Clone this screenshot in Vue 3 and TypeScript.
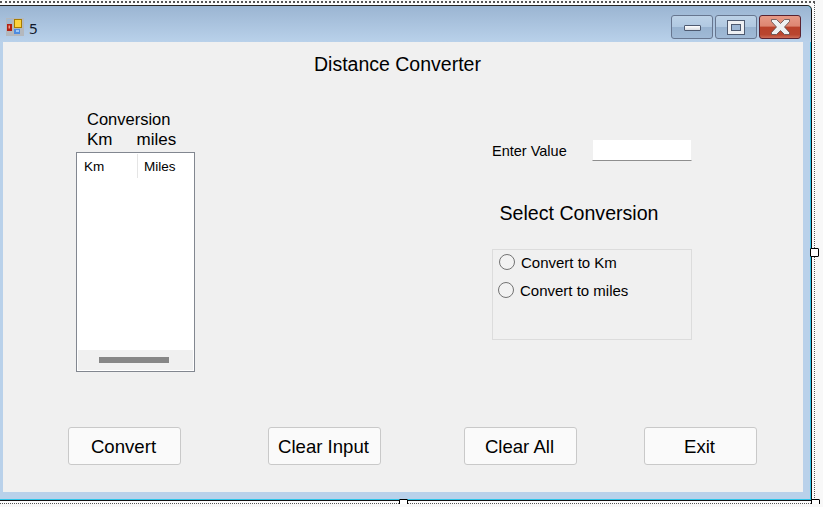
<script setup lang="ts">
const options: string[] = ['Convert to Km', 'Convert to miles']
const actions: { label: string; cls: string }[] = [
  { label: 'Convert', cls: 'a1' },
  { label: 'Clear Input', cls: 'a2' },
  { label: 'Clear All', cls: 'a3' },
  { label: 'Exit', cls: 'a4' },
]
</script>

<template>
  <div class="stage">
    <div class="window">
      <header class="titlebar">
        <svg class="app-icon" width="18" height="18" viewBox="0 0 18 18">
          <rect x="0" y="0" width="18" height="18" fill="#b4b8bd" />
          <rect x="1" y="1" width="5" height="5" fill="#a3b9d0" />
          <rect x="1" y="6" width="5" height="7" fill="#b31f12" />
          <rect x="2.5" y="7.5" width="1.5" height="3" fill="#f0a090" />
          <rect x="8" y="1" width="8" height="9" fill="#a77c00" />
          <rect x="9" y="2" width="6" height="7" fill="#fcd23c" />
          <rect x="8" y="11" width="6" height="5" fill="#4d8be0" />
          <rect x="10" y="12" width="3" height="2" fill="#a0c8f5" />
        </svg>
        <span class="form-name">5</span>
        <div class="caption-btns">
          <div class="cap cap-min"><span class="min-glyph"></span></div>
          <div class="cap cap-max"><span class="max-glyph"></span></div>
          <div class="cap cap-close">
            <svg width="19" height="16" viewBox="0 0 19 16">
              <path d="M0.5 0.5 H5.5 L9.5 4.5 L13.5 0.5 H18.5 V2.5 L13.5 8 L18.5 13.5 V15.5 H13.5 L9.5 11.5 L5.5 15.5 H0.5 V13.5 L5.5 8 L0.5 2.5 Z" fill="#eef0f2" stroke="#5a4a4a" stroke-width="0.8" />
            </svg>
          </div>
        </div>
      </header>

      <main class="client">
        <h1 class="heading">Distance Converter</h1>
        <div class="columns">
          <section class="left">
            <div class="list-title">Conversion</div>
            <div class="list-units"><span>Km</span><span>miles</span></div>
            <div class="listview">
              <div class="list-head">
                <span class="col-km">Km</span>
                <span class="col-miles">Miles</span>
              </div>
              <div class="list-body"></div>
              <div class="hscroll"><span class="thumb"></span></div>
            </div>
          </section>
          <section class="right">
            <div class="value-row">
              <label class="value-label">Enter Value</label>
              <input class="value-input" type="text" />
            </div>
            <div class="select-title">Select Conversion</div>
            <div class="group">
              <label v-for="(o, i) in options" :key="o" class="radio" :class="'r' + i">
                <span class="dot"></span>{{ o }}
              </label>
            </div>
          </section>
        </div>
        <div class="actions">
          <button v-for="a in actions" :key="a.label" class="action" :class="a.cls" type="button">{{ a.label }}</button>
        </div>
      </main>
    </div>
    <span class="handle h-right"></span>
    <span class="handle h-bottom"></span>
    <span class="handle h-corner"></span>
  </div>
</template>

<style>
html, body { margin: 0; padding: 0; background: #f8f8f8; overflow: hidden; }
</style>

<style scoped>
.stage {
  position: relative;
  box-sizing: border-box;
  width: 815px;
  height: 503px;
  margin-top: 1px;
  border-top: 2px dotted #555;
  border-right: 1px dotted #555;
  border-bottom: 1px dotted #555;
  background: #fbfbfb;
  font-family: "Liberation Sans", Arial, sans-serif;
  color: #000;
}
.window {
  box-sizing: border-box;
  width: 812px;
  height: 496px;
  margin-top: 2px;
  border-top: 1px solid #222;
  border-right: 1px solid #111;
  border-bottom: 1px solid #111;
  border-top-right-radius: 5px;
  background: #b9d1ea;
  box-shadow: -1px 0 0 #2ec4e8 inset, 0 -1px 0 #2ec4e8 inset;
  display: flex;
  flex-direction: column;
}
.titlebar {
  flex: none;
  height: 36px;
  display: flex;
  align-items: flex-start;
  background: linear-gradient(#9bb5d2, #b9d1ea);
  border-top-right-radius: 5px;
}
.app-icon { margin: 12px 0 0 6px; flex: none; }
.form-name {
  margin: 14px 0 0 5px;
  font-family: "Noto Sans", sans-serif;
  font-size: 15px;
  line-height: 16px;
  color: #10182a;
}
.caption-btns {
  margin: 9px 10px 0 auto;
  display: flex;
  gap: 2px;
}
.cap {
  box-sizing: border-box;
  width: 42px;
  height: 24px;
  border: 1px solid #67768f;
  border-radius: 3px;
  background: linear-gradient(#bdd2e7 0%, #b1c9e1 48%, #98b3d0 52%, #a0bad6 100%);
  display: flex;
  align-items: center;
  justify-content: center;
}
.cap-close {
  border-color: #5a2230;
  background: linear-gradient(#e79a87 0%, #dd8672 45%, #b9412a 52%, #b9452f 85%, #cc6c58 100%);
}
.min-glyph {
  width: 15px;
  height: 4px;
  margin-top: 1px;
  background: linear-gradient(#fff, #d8dce2);
  border: 1px solid #4e5a70;
  border-radius: 1px;
}
.max-glyph {
  box-sizing: border-box;
  width: 16px;
  height: 13px;
  background: #9cb6d4;
  border: 3px solid #eef0f3;
  outline: 1px solid #4e5a70;
  box-shadow: inset 0 0 0 1px #4e5a70;
}
.client {
  flex: 1;
  margin: 0 8px 8px 3px;
  background: #f0f0f0;
  display: flex;
  flex-direction: column;
  min-height: 0;
}
.heading {
  margin: 10px 0 0 311px;
  font-weight: 400;
  font-size: 19.5px;
  line-height: 24px;
  height: 24px;
}
.columns { display: flex; height: 322px; margin-top: 12px; }
.left { width: 119px; margin-left: 73px; flex: none; }
.list-title { margin: 21px 0 0 11px; font-size: 16.5px; line-height: 20px; }
.list-units {
  display: flex;
  gap: 24px;
  margin-left: 11px;
  font-size: 17px;
  line-height: 21px;
}
.listview {
  box-sizing: border-box;
  width: 119px;
  height: 220px;
  margin-top: 2px;
  border: 1px solid #828790;
  background: #fff;
  padding: 1px;
  display: flex;
  flex-direction: column;
}
.list-head { display: flex; height: 24px; font-size: 13.5px; line-height: 26px; }
.col-km { box-sizing: border-box; width: 60px; padding-left: 6px; border-right: 1px solid #e5e5e5; }
.col-miles { padding-left: 6px; }
.list-body { flex: 1; }
.hscroll {
  height: 20px;
  background: #f0f0f0;
  padding: 7px 0 0 21px;
  box-sizing: border-box;
}
.thumb { display: block; width: 70px; height: 6px; background: #868686; }
.right { margin-left: 297px; width: 200px; flex: none; }
.value-row { display: flex; align-items: flex-start; height: 22px; margin-top: 51px; }
.value-label { width: 100px; font-size: 14.5px; line-height: 24px; }
.value-input {
  box-sizing: border-box;
  width: 100px;
  height: 22px;
  padding: 0;
  background: #fff;
  border: 1px solid #f0f0f0;
  border-bottom: 1px solid #8e8e8e;
  outline: none;
}
.select-title { margin: 40px 0 0 7.5px; font-size: 19.6px; line-height: 24px; }
.group {
  box-sizing: border-box;
  height: 91px;
  margin-top: 24px;
  border: 1px solid #dcdcdc;
  background: #f0f0f0;
  display: flex;
  flex-direction: column;
  gap: 8px;
  padding-top: 2px;
}
.radio { display: flex; align-items: center; height: 20px; font-size: 15px; }
.r0 { margin-left: 6px; }
.r1 { margin-left: 5px; }
.dot {
  box-sizing: border-box;
  width: 16px;
  height: 16px;
  margin-right: 6px;
  border: 1px solid #737373;
  border-radius: 50%;
  background: #f2f2f2;
}
.actions { display: flex; margin-top: 17px; padding-left: 65px; }
.action {
  box-sizing: border-box;
  width: 113px;
  height: 38px;
  padding: 1px 2px 0 0;
  background: #fafafa;
  border: 1px solid #c9c9c9;
  border-radius: 3px;
  font-family: inherit;
  font-size: 18.6px;
  color: #000;
}
.a2 { margin-left: 87px; }
.a3 { margin-left: 83px; }
.a4 { margin-left: 67px; }
.handle {
  position: absolute;
  box-sizing: border-box;
  width: 9px;
  height: 9px;
  background: #fff;
  border: 1px solid #000;
  border-radius: 1px;
}
.h-right { left: 810px; top: 245px; }
.h-bottom { left: 399px; top: 496px; }
.h-corner { left: 811px; top: 496px; }
</style>
